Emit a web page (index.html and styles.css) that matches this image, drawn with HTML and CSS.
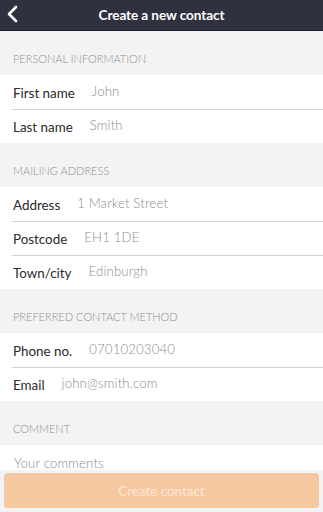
FILE: index.html
```html
<!DOCTYPE html>
<html lang="en">
<head>
    <meta charset="UTF-8">
    <meta name="viewport" content="width=device-width, initial-scale=1.0">
    <title>Create a new contact</title>
    <link rel="stylesheet" href="styles.css">
</head>
<body>
    <header class="topbar">
        <button class="back" aria-label="Back">
            <svg width="12" height="18" viewBox="0 0 12 18">
                <path d="M10 2 L3 9 L10 16" fill="none" stroke="#fff" stroke-width="2.6" stroke-linecap="round" stroke-linejoin="round"/>
            </svg>
        </button>
        <h1>Create a new contact</h1>
    </header>

    <main class="form">
        <div class="section-title">Personal information</div>
        <div class="group">
            <label class="row"><span class="label">First name</span><span class="value">John</span></label>
            <label class="row"><span class="label">Last name</span><span class="value">Smith</span></label>
        </div>

        <div class="section-title">Mailing address</div>
        <div class="group">
            <label class="row"><span class="label">Address</span><span class="value">1 Market Street</span></label>
            <label class="row"><span class="label">Postcode</span><span class="value">EH1 1DE</span></label>
            <label class="row"><span class="label">Town/city</span><span class="value">Edinburgh</span></label>
        </div>

        <div class="section-title">Preferred contact method</div>
        <div class="group">
            <label class="row"><span class="label">Phone no.</span><span class="value">07010203040</span></label>
            <label class="row"><span class="label">Email</span><span class="value">john@smith.com</span></label>
        </div>

        <div class="section-title">Comment</div>
        <div class="group comment">
            <span class="value">Your comments</span>
        </div>
    </main>

    <footer class="actions">
        <button class="submit">Create contact</button>
    </footer>
</body>
</html>
```

FILE: styles.css
```css
* {
    margin: 0;
    padding: 0;
    box-sizing: border-box;
    font-family: 'Lato', 'Open Sans', sans-serif;
}

body {
    background: #f3f3f3;
    height: 512px;
    overflow: hidden;
}

.topbar {
    height: 31px;
    background: #30313f;
    border-bottom: 1px solid #1e1f2c;
    display: flex;
    align-items: center;
    justify-content: center;
    position: relative;
}

.topbar h1 {
    color: #fff;
    font-size: 13.6px;
    font-weight: 700;
    letter-spacing: -0.1px;
}

.back {
    position: absolute;
    left: 6px;
    top: 5px;
    background: none;
    border: none;
    display: flex;
}

.section-title {
    height: 44px;
    padding: 21px 13px 0;
    font-size: 11px;
    font-weight: 300;
    color: #8e8e8e;
    text-transform: uppercase;
}

.group {
    background: #fff;
}

.row {
    display: flex;
    align-items: center;
    height: 34px;
    padding-left: 13px;
    gap: 17px;
    position: relative;
}

.row + .row::before {
    content: '';
    position: absolute;
    left: 12px;
    right: 0;
    top: 0;
    border-top: 1px solid #d4d4d4;
}

.label {
    font-size: 13.4px;
    color: #2a2a2a;
    padding-top: 2px;
}

.value {
    font-size: 13.2px;
    font-weight: 300;
    color: #8c8c8c;
    letter-spacing: 0.15px;
    padding-bottom: 2px;
}

.comment {
    height: 40px;
    padding: 7px 14px;
}

.actions {
    position: fixed;
    left: 0;
    right: 0;
    bottom: 0;
    height: 42px;
    background: #f3f3f3;
    padding: 0 4px 4px;
    display: flex;
    align-items: flex-end;
}

.submit {
    width: 100%;
    height: 35px;
    border: none;
    border-radius: 4px;
    background: #f6c8a0;
    color: #fbe7d6;
    font-size: 13.4px;
}
```
